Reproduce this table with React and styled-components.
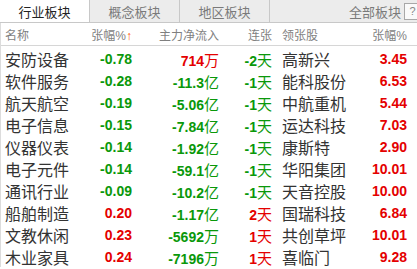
import React from 'react';
import styled, { createGlobalStyle } from 'styled-components';

const GlobalStyle = createGlobalStyle`
    html, body {
        margin: 0;
        padding: 0;
        background: #fff;
    }
    body {
        font-family: "Liberation Sans", "Noto Sans CJK SC", sans-serif;
    }
`;

const Panel = styled.div`
    width: 417px;
    height: 269px;
    overflow: hidden;
    background: #fff;
`;

const TabBar = styled.div`
    display: flex;
    height: 22px;
    background: #ececec;
    border-bottom: 1px solid #c8c8c8;
    overflow: hidden;
`;

const Tab = styled.div`
    width: 89px;
    flex-shrink: 0;
    display: flex;
    align-items: center;
    justify-content: center;
    font-size: 13px;
    color: ${({active}) => active ? '#222' : '#7a7a7a'};
    background: ${({active}) => active ? '#fff' : '#ececec'};
    border-right: 1px solid #c8c8c8;
`;

const TabSpacer = styled.div`
    flex: 1;
`;

const AllTab = styled.div`
    display: flex;
    align-items: center;
    font-size: 13px;
    color: #7a7a7a;
    margin-right: -4px;
    flex-shrink: 0;
`;

const HelpBox = styled.div`
    width: 15px;
    height: 15px;
    margin-left: 3px;
    border: 1px solid #a8a8a8;
    background: #fafafa;
    color: #888;
    font-size: 11px;
    display: flex;
    align-items: center;
    justify-content: center;
    flex-shrink: 0;
`;

const Table = styled.div`
    border-left: 1px solid #dcdcdc;
`;

const Row = styled.div`
    display: grid;
    grid-template-columns: 71px 56px 87px 53px 10px 88px 37px;
    padding-left: 4px;
    height: 22px;
    align-items: center;
    border-bottom: ${({head}) => head ? '1px solid #d6d6d6' : 'none'};
    margin-bottom: ${({head}) => head ? '1px' : '0'};
`;

const HeadCell = styled.div`
    font-size: 12px;
    color: #7f7f7f;
    text-align: ${({left}) => left ? 'left' : 'right'};
    white-space: nowrap;
`;

const Arrow = styled.span`
    color: #ff5500;
    font-size: 12px;
`;

const Name = styled.div`
    font-size: 16px;
    color: #333;
    white-space: nowrap;
`;

const Num = styled.div`
    font-size: 14px;
    font-weight: bold;
    text-align: right;
    white-space: nowrap;
    color: ${({up}) => up ? '#e40000' : '#0a980a'};
`;

const Unit = styled.span`
    font-size: 15px;
    font-weight: normal;
`;

const Stock = styled.div`
    font-size: 16px;
    color: #333;
    white-space: nowrap;
`;

const rows = [
    ['安防设备', '-0.78', '714', '万', '-2', '高新兴', '3.45'],
    ['软件服务', '-0.28', '-11.3', '亿', '-1', '能科股份', '6.53'],
    ['航天航空', '-0.19', '-5.06', '亿', '-1', '中航重机', '5.44'],
    ['电子信息', '-0.15', '-7.84', '亿', '-1', '运达科技', '7.03'],
    ['仪器仪表', '-0.14', '-1.92', '亿', '-1', '康斯特', '2.90'],
    ['电子元件', '-0.14', '-59.1', '亿', '-1', '华阳集团', '10.01'],
    ['通讯行业', '-0.09', '-10.2', '亿', '-1', '天音控股', '10.00'],
    ['船舶制造', '0.20', '-1.17', '亿', '2', '国瑞科技', '6.84'],
    ['文教休闲', '0.23', '-5692', '万', '1', '共创草坪', '10.01'],
    ['木业家具', '0.24', '-7196', '万', '1', '喜临门', '9.28'],
];

const isUp = v => !v.startsWith('-');

export default function App() {
    return (
        <Panel>
            <GlobalStyle/>
            <TabBar>
                <Tab active>行业板块</Tab>
                <Tab>概念板块</Tab>
                <Tab>地区板块</Tab>
                <TabSpacer/>
                <AllTab>全部板块<HelpBox>?</HelpBox></AllTab>
            </TabBar>
            <Table>
                <Row head>
                    <HeadCell left>名称</HeadCell>
                    <HeadCell>张幅%<Arrow>↑</Arrow></HeadCell>
                    <HeadCell>主力净流入</HeadCell>
                    <HeadCell>连张</HeadCell>
                    <div/>
                    <HeadCell left>领张股</HeadCell>
                    <HeadCell>张幅%</HeadCell>
                </Row>
                {rows.map(([name, pct, flow, unit, days, stock, lead]) => (
                    <Row key={name}>
                        <Name>{name}</Name>
                        <Num up={isUp(pct)}>{pct}</Num>
                        <Num up={isUp(flow)}>{flow}<Unit>{unit}</Unit></Num>
                        <Num up={isUp(days)}>{days}<Unit>天</Unit></Num>
                        <div/>
                        <Stock>{stock}</Stock>
                        <Num up>{lead}</Num>
                    </Row>
                ))}
            </Table>
        </Panel>
    );
}
